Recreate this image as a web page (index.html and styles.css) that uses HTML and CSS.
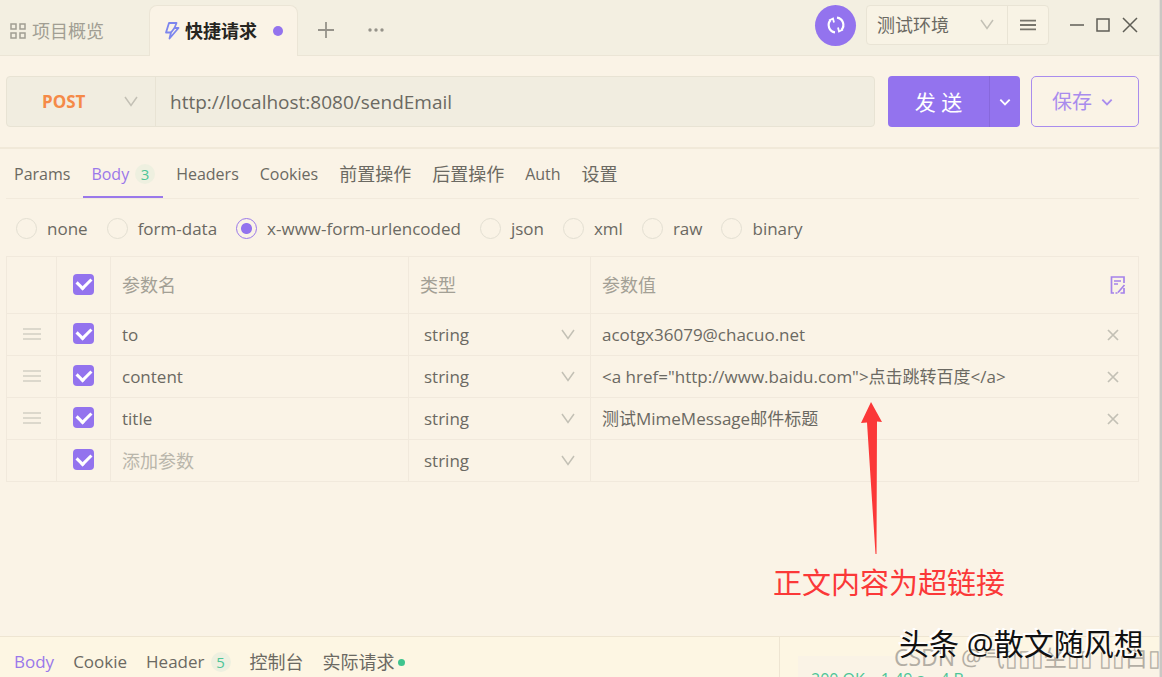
FILE: index.html
```html
<!DOCTYPE html>
<html lang="zh-CN">
<head>
<meta charset="utf-8">
<title>快捷请求</title>
<link rel="stylesheet" href="styles.css">
</head>
<body>
<svg class="defs" aria-hidden="true">
  <symbol id="chev" viewBox="0 0 14 12"><path d="M1 1l6 8.500 6-8.500" fill="none" stroke="currentColor" stroke-width="1.500"/></symbol>
  <symbol id="chev-sm" viewBox="0 0 12 12"><path d="M2 4l4 4 4-4" fill="none" stroke="currentColor" stroke-width="1.600"/></symbol>
  <symbol id="bars" viewBox="0 0 18 14"><path d="M0 2h18M0 7h18M0 12h18" stroke="currentColor" stroke-width="2"/></symbol>
  <symbol id="cross" viewBox="0 0 12 12"><path d="M1 1l10 10M11 1L1 11" stroke="currentColor" stroke-width="1.700"/></symbol>
</svg>
<div class="window">
<div class="app">
  <header class="titlebar">
    <nav class="doc-tabs">
      <button class="doc-tab">
        <svg width="17" height="16" viewBox="0 0 17 16" fill="none" stroke="currentColor" stroke-width="1.500"><rect x="1" y="1" width="5" height="5"/><rect x="10" y="1" width="5" height="5"/><rect x="1" y="10" width="5" height="5"/><rect x="10" y="10" width="5" height="5"/></svg>
        项目概览
      </button>
      <button class="doc-tab active">
        <svg width="16" height="18" viewBox="0 0 16 18" fill="none" stroke="#7d86ee" stroke-width="1.800" stroke-linejoin="round"><path d="M5 1h7.500L10.500 6H14.500L5.500 16.500 7 10.500H2z"/><path d="M10.500 6L7 10.500"/></svg>
        快捷请求<span class="dot"></span>
      </button>
      <button class="icon-btn" aria-label="新建"><svg width="16" height="16" viewBox="0 0 16 16" stroke="#96938a" stroke-width="1.800"><path d="M8 0v16M0 8h16"/></svg></button>
      <button class="icon-btn more" aria-label="更多"><svg width="16" height="4" viewBox="0 0 16 4" fill="#96938a"><circle cx="2" cy="2" r="1.700"/><circle cx="8" cy="2" r="1.700"/><circle cx="14" cy="2" r="1.700"/></svg></button>
    </nav>
    <div class="tools">
      <button class="sync" aria-label="同步"><svg width="20" height="20" viewBox="0 0 20 20" fill="none" stroke="#fff" stroke-width="2.200"><path d="M9 17.300A7.300 7.300 0 0 1 4.600 5.100M11 2.700a7.300 7.300 0 0 1 4.400 12.200"/><path d="M3 5.500L7 3.500 8 7.500M17 14.500l-4 2-1-4" stroke-width="1.800" fill="none"/></svg></button>
      <div class="env">
        <span class="pick"><select aria-label="环境"><option>测试环境</option></select><svg class="chev"><use href="#chev"/></svg></span>
        <button class="env-menu" aria-label="环境管理"><svg width="16" height="14"><use href="#bars"/></svg></button>
      </div>
      <div class="win-ctl">
        <button class="icon-btn" aria-label="最小化"><svg width="14" height="16" stroke="#5f5e56" stroke-width="1.500"><path d="M0 8h14"/></svg></button>
        <button class="icon-btn" aria-label="最大化"><svg width="14" height="14" fill="none" stroke="#5f5e56" stroke-width="1.500"><rect x="1" y="1" width="12" height="12"/></svg></button>
        <button class="icon-btn" aria-label="关闭"><svg width="16" height="16" stroke="#5f5e56" stroke-width="1.500"><path d="M1 1l14 14M15 1L1 15"/></svg></button>
      </div>
    </div>
  </header>

  <section class="request">
    <div class="address">
      <span class="pick method"><select aria-label="请求方法"><option>POST</option></select><svg class="chev"><use href="#chev"/></svg></span>
      <input class="url" aria-label="请求地址" value="http://localhost:8080/sendEmail">
    </div>
    <div class="send">
      <button class="send-main">发 送</button>
      <button class="send-more" aria-label="更多发送方式"><svg width="14" height="14"><use href="#chev-sm"/></svg></button>
    </div>
    <button class="save">保存<svg width="14" height="14"><use href="#chev-sm"/></svg></button>
  </section>

  <main class="editor">
    <nav class="tabs">
      <button class="tab">Params</button>
      <button class="tab active">Body<span class="badge">3</span></button>
      <button class="tab">Headers</button>
      <button class="tab">Cookies</button>
      <button class="tab cjk">前置操作</button>
      <button class="tab cjk">后置操作</button>
      <button class="tab">Auth</button>
      <button class="tab cjk">设置</button>
    </nav>
    <div class="types">
      <label><input type="radio" name="type">none</label>
      <label><input type="radio" name="type">form-data</label>
      <label><input type="radio" name="type" checked>x-www-form-urlencoded</label>
      <label><input type="radio" name="type">json</label>
      <label><input type="radio" name="type">xml</label>
      <label><input type="radio" name="type">raw</label>
      <label><input type="radio" name="type">binary</label>
    </div>
    <table class="params">
      <colgroup><col class="c-drag"><col class="c-check"><col class="c-name"><col class="c-type"><col></colgroup>
      <thead>
        <tr><th></th><th class="mid"><input type="checkbox" checked aria-label="全选"></th><th>参数名</th><th>类型</th>
        <th><div class="value">参数值<button class="icon-btn bulk" aria-label="批量编辑"><svg width="16" height="18" viewBox="0 0 16 18" fill="none" stroke="#a583ea" stroke-width="1.700"><path d="M4 17H1.500V1h12.500v6M4 5h7M4 8h4M14.500 9L8 16.500M14 12v5h-3.500M5.500 17h2"/></svg></button></div></th></tr>
      </thead>
      <tbody>
        <tr><td class="mid"><svg class="drag"><use href="#bars"/></svg></td><td class="mid"><input type="checkbox" checked aria-label="启用 to"></td><td><input class="cell" aria-label="参数名" value="to"></td><td><span class="pick"><select aria-label="类型"><option>string</option></select><svg class="chev"><use href="#chev"/></svg></span></td><td><div class="value"><input class="cell" aria-label="参数值" value="acotgx36079@chacuo.net"><button class="icon-btn del" aria-label="删除"><svg width="12" height="12"><use href="#cross"/></svg></button></div></td></tr>
        <tr><td class="mid"><svg class="drag"><use href="#bars"/></svg></td><td class="mid"><input type="checkbox" checked aria-label="启用 content"></td><td><input class="cell" aria-label="参数名" value="content"></td><td><span class="pick"><select aria-label="类型"><option>string</option></select><svg class="chev"><use href="#chev"/></svg></span></td><td><div class="value"><input class="cell" aria-label="参数值" value="&lt;a href=&quot;http://www.baidu.com&quot;&gt;点击跳转百度&lt;/a&gt;"><button class="icon-btn del" aria-label="删除"><svg width="12" height="12"><use href="#cross"/></svg></button></div></td></tr>
        <tr><td class="mid"><svg class="drag"><use href="#bars"/></svg></td><td class="mid"><input type="checkbox" checked aria-label="启用 title"></td><td><input class="cell" aria-label="参数名" value="title"></td><td><span class="pick"><select aria-label="类型"><option>string</option></select><svg class="chev"><use href="#chev"/></svg></span></td><td><div class="value"><input class="cell" aria-label="参数值" value="测试MimeMessage邮件标题"><button class="icon-btn del" aria-label="删除"><svg width="12" height="12"><use href="#cross"/></svg></button></div></td></tr>
        <tr><td></td><td class="mid"><input type="checkbox" checked aria-label="启用新参数"></td><td><input class="cell cjk" aria-label="参数名" placeholder="添加参数"></td><td><span class="pick"><select aria-label="类型"><option>string</option></select><svg class="chev"><use href="#chev"/></svg></span></td><td><input class="cell" aria-label="参数值"></td></tr>
      </tbody>
    </table>
  </main>

  <footer class="response">
    <nav class="tabs result-tabs">
      <button class="tab active">Body</button>
      <button class="tab">Cookie</button>
      <button class="tab">Header<span class="badge">5</span></button>
      <button class="tab cjk">控制台</button>
      <button class="tab cjk">实际请求<span class="dot-green"></span></button>
    </nav>
    <div class="status"><div class="status-box"><span>200 OK</span><span>1.49 s</span><span>4 B</span></div></div>
  </footer>
</div>
<div class="edge"></div>

<div class="note">
  <svg width="22" height="152" viewBox="0 0 22 152"><path d="M10 0L21 20 16 19.500 15.500 152H14.500L6 20.500 0 21z" fill="#fb3838"/></svg>
  <span>正文内容为超链接</span>
</div>
<div class="mark-back">CSDN @气▯▯▯坐▯▯ ▯▯白▯</div>
<div class="mark">头条 @散文随风想</div>
</div>
</body>
</html>
```
FILE: styles.css
```css
* { box-sizing: border-box; }
body {
  margin: 0;
  font-family: "Open Sans", "Noto Sans CJK SC", sans-serif;
  font-size: 17px;
  line-height: 24px;
  color: #6b6962;
  background: #faf3e6;
}
button, input, select { font: inherit; color: inherit; background: none; border: 0; margin: 0; padding: 0; }
button { display: flex; align-items: center; justify-content: center; white-space: nowrap; }
input, select { min-width: 0; outline: 0; }
svg { flex: none; display: block; }
.defs { display: none; }
.window { position: relative; display: flex; min-height: 100vh; overflow: hidden; }
.app { flex: 1; min-width: 0; display: flex; flex-direction: column; }
.edge { width: 3px; background: #c9c7c3; border-left: 1px solid #e4e0d8; }

.pick { display: grid; align-items: center; }
.pick > * { grid-area: 1 / 1; }
.pick select { appearance: none; width: 100%; }
.chev { width: 14px; height: 12px; justify-self: end; color: #c3c0b5; pointer-events: none; }

.titlebar { display: flex; justify-content: space-between; background: #f3efe1; height: 56px; box-shadow: inset 0 -1px #ebe5d6; }
.doc-tabs { display: flex; align-items: stretch; }
.doc-tab { width: 149px; padding: 6px 0 0 10px; gap: 5px; justify-content: flex-start; font-size: 18px; color: #a19e93; }
.doc-tab.active { margin-top: 5px; padding: 0 0 0 14px; border: 1px solid #ebe5d6; border-bottom: 0; border-radius: 8px 8px 0 0; background: #faf3e6; color: #262521; font-weight: 700; }
.dot { width: 10px; height: 10px; border-radius: 50%; background: #9373ee; margin-left: 11px; }
.doc-tabs .icon-btn { margin-left: 20px; padding-top: 4px; }
.doc-tabs .more { margin-left: 34px; }
.tools { display: flex; align-items: center; padding: 0 21px 6px 0; }
.sync { width: 41px; height: 41px; border-radius: 50%; background: #9373ee; margin-right: 10px; }
.env { display: flex; height: 40px; border: 1px solid #e9e4d5; border-radius: 4px; background: #f8f3e5; font-size: 18px; }
.env .pick { width: 140px; padding: 0 13px 0 10px; }
.env-menu { width: 41px; border-left: 1px solid #e9e4d5; color: #77756c; }
.win-ctl { display: flex; align-items: center; gap: 12px; margin-left: 21px; }

.request { display: flex; padding: 20px 20px 20px 6px; border-bottom: 2px solid #f1e9d9; }
.address { flex: 1; display: flex; height: 51px; border: 1px solid #e8e3d4; border-radius: 4px; background: #f1ede0; }
.method { width: 149px; padding: 0 17px 0 35px; border-right: 1px solid #e8e3d4; color: #f58a48; font-weight: 700; }
.url { flex: 1; padding: 0 14px; font-size: 19px; }
.send { display: flex; margin: 0 11px 0 13px; border-radius: 4px; background: #9373ee; color: #fff; }
.send-main { width: 101px; font-size: 21px; }
.send-more { width: 31px; border-left: 1px solid #8768dc; }
.save { width: 108px; padding-right: 4px; gap: 8px; border: 1px solid #a98ced; border-radius: 5px; color: #a98ced; font-size: 20px; }

.editor { flex: 1; padding: 0 20px 0 6px; }
.tabs { display: flex; gap: 5px; height: 50px; border-bottom: 1px solid #f2eadc; }
.tab { padding: 0 8px; gap: 6px; font-size: 16px; }
.tab.active { color: #9a78ea; box-shadow: inset 0 -2px #9a78ea; }
.badge { min-width: 20px; height: 20px; border-radius: 10px; line-height: 20px; font-size: 15px; text-align: center; color: #4dc598; background: #eef0e0; }
.types { display: flex; gap: 19px; height: 57px; align-items: center; padding: 2px 0 0 10px; }
.types label { display: flex; align-items: center; gap: 10px; }
input[type=radio] { appearance: none; width: 21px; height: 21px; border: 1px solid #e3dfd2; border-radius: 50%; }
input[type=radio]:checked { border-color: #9a78ea; background: radial-gradient(circle, #9373ee 5px, transparent 6px); }
input[type=checkbox] { appearance: none; display: grid; place-items: center; width: 21px; height: 21px; border-radius: 4px; background: #9373ee; }
input[type=checkbox]::before { content: ""; width: 7px; height: 11px; margin-bottom: 4px; border: solid #fff; border-width: 0 3px 3px 0; transform: rotate(45deg); }

.params { width: 100%; table-layout: fixed; border-collapse: collapse; }
.params th, .params td { height: 42px; padding: 0 11px; border: 1px solid #f1e9dc; text-align: left; font-weight: 400; }
.params th { height: 57px; color: #a3a095; font-size: 18px; }
.params .mid { padding: 0 0 2px; }
.mid > * { margin: 0 auto; }
.c-drag { width: 50px; }
.c-check { width: 54px; }
.c-name { width: 298px; }
.c-type { width: 182px; }
.cell { width: 100%; display: block; }
.cell::placeholder { color: #b9b6ab; opacity: 1; }
td .pick { padding: 0 4px; }
.drag { width: 18px; height: 14px; color: #dcd8cc; }
.value { display: flex; align-items: center; justify-content: space-between; }
.bulk { padding-right: 1px; }
.del { padding: 0 8px; color: #c3c0b5; }
.cjk { font-size: 18px; }

.response { display: flex; height: 41px; border-top: 1px solid #eee5d2; background: #fdf6e3; overflow: hidden; }
.result-tabs { width: 780px; gap: 3px; padding-left: 6px; border-bottom: 0; border-right: 1px solid #eee5d2; }
.result-tabs .tab { font-size: 17px; }
.result-tabs .cjk { font-size: 18px; }
.result-tabs .tab.active { box-shadow: none; }
.dot-green { width: 7px; height: 7px; border-radius: 50%; background: #3fc48e; margin-left: -3px; }
.status { flex: 1; padding: 19px 0 0 18px; }
.status-box { display: flex; gap: 16px; padding: 11px 13px; background: #faf3e6; color: #4dc598; font-size: 16px; }

.note { position: absolute; left: 773px; top: 402px; color: #fb3838; font-size: 29px; line-height: 40px; }
.note svg { margin: 0 0 9px 88px; }
.mark, .mark-back { position: absolute; white-space: nowrap; }
.mark { left: 899px; top: 624px; font-size: 30px; line-height: 40px; color: #111; text-shadow: -1px -1px #fff, -2px -2px #fff; }
.mark-back { left: 894px; top: 642px; font-size: 23px; line-height: 30px; color: #b3aea4; }
```
